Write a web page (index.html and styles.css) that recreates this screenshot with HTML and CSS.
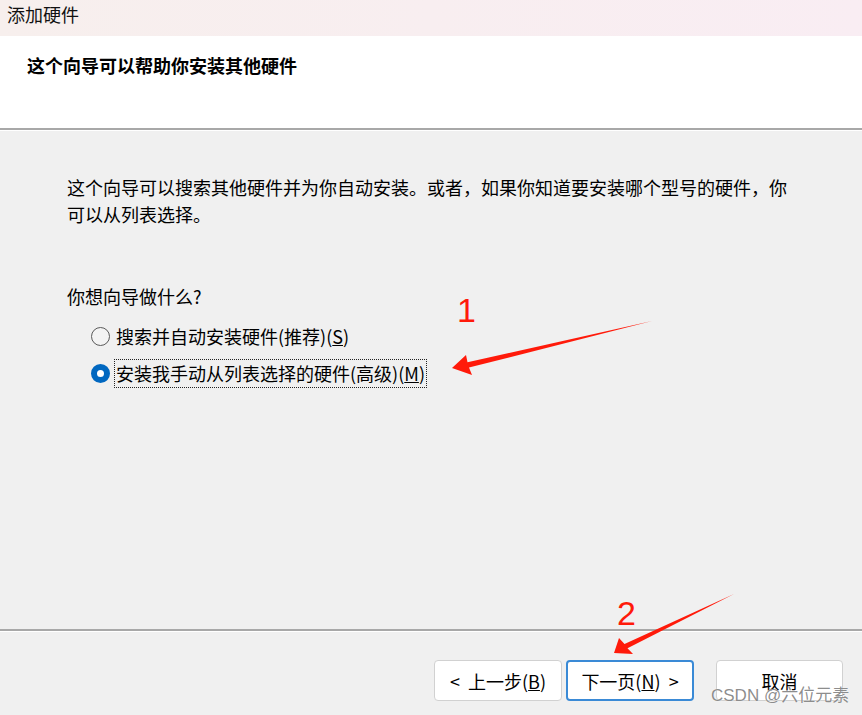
FILE: index.html
```html
<!DOCTYPE html>
<html lang="zh-CN">
<head>
<meta charset="utf-8">
<title>添加硬件</title>
<link rel="stylesheet" href="styles.css">
</head>
<body>
<div class="window">
  <div class="titlebar">添加硬件</div>
  <div class="header">
    <h1 class="heading">这个向导可以帮助你安装其他硬件</h1>
  </div>
  <div class="sep"></div>
  <div class="main">
    <p class="intro">这个向导可以搜索其他硬件并为你自动安装。或者，如果你知道要安装哪个型号的硬件，你可以从列表选择。</p>
    <p class="question">你想向导做什么?</p>
    <div class="options">
      <label class="option">
        <span class="radio"></span>
        <span class="opt-text">搜索并自动安装硬件(推荐)(<u>S</u>)</span>
      </label>
      <label class="option">
        <span class="radio checked"></span>
        <span class="opt-text focus">安装我手动从列表选择的硬件(高级)(<u>M</u>)</span>
      </label>
    </div>
  </div>
  <div class="sep"></div>
  <div class="footer">
    <button class="btn">&lt;&nbsp; 上一步(<u>B</u>)</button>
    <button class="btn primary">下一页(<u>N</u>)&nbsp; &gt;</button>
    <button class="btn cancel">取消</button>
  </div>
  <svg class="annot" width="862" height="715" viewBox="0 0 862 715">
    <text x="457" y="322" class="num">1</text>
    <polygon points="652,321 467.5,362.2 466,355 452,368 472,375 469,367.6" fill="#ff1a0a"/>
    <text x="617" y="625" class="num">2</text>
    <polygon points="734,594 624.5,644 619,638 614,653 633,654 627.5,648.2" fill="#ff1a0a"/>
  </svg>
  <div class="watermark">CSDN @六位元素</div>
</div>
</body>
</html>
```
FILE: styles.css
```css
html, body {
  margin: 0;
  padding: 0;
}
body {
  width: 862px;
  height: 715px;
  overflow: hidden;
  background: #f0f0f0;
  font-family: "Noto Sans CJK SC", "Noto Sans", sans-serif;
  color: #000;
}
.window {
  position: relative;
  display: flex;
  flex-direction: column;
  width: 862px;
  height: 715px;
}
.titlebar {
  height: 36px;
  box-sizing: border-box;
  padding-left: 7px;
  font-size: 18px;
  line-height: 28px;
  background: linear-gradient(to right, #f7efed, #f9edf3);
  color: #111;
}
.header {
  height: 92px;
  box-sizing: border-box;
  background: #ffffff;
  padding: 16px 0 0 27px;
}
.heading {
  margin: 0;
  font-size: 18px;
  line-height: 26px;
  font-weight: 700;
  color: #000;
}
.sep {
  height: 2px;
  background: #a8a8a8;
  border-bottom: 1px solid #ffffff;
  flex: none;
}
.main {
  flex: 1;
  padding: 43px 60px 0 67px;
  font-size: 18px;
}
.intro {
  margin: 0;
  line-height: 27px;
  width: 725px;
}
.question {
  margin: 55px 0 0 0;
  line-height: 27px;
}
.options {
  margin-top: 8px;
  padding-left: 24px;
  display: flex;
  flex-direction: column;
}
.option {
  display: flex;
  align-items: center;
  height: 37px;
}
.radio {
  width: 17px;
  height: 17px;
  border: 1px solid #5a5a5a;
  border-radius: 50%;
  box-sizing: content-box;
  background: #f3f3f3;
  margin-right: 4px;
  flex: none;
}
.radio.checked {
  width: 7px;
  height: 7px;
  border: 6px solid #0067c0;
  background: #ffffff;
}
.opt-text {
  padding: 0 1px 0 1px;
  line-height: 27px;
  border: 1px dotted transparent;
}
.opt-text.focus {
  border-color: #222;
}
.footer {
  height: 83px;
  box-sizing: border-box;
  padding: 28px 19px 0 0;
  display: flex;
  justify-content: flex-end;
  align-items: flex-start;
}
.btn {
  width: 128px;
  height: 41px;
  box-sizing: border-box;
  background: #ffffff;
  border: 1px solid #d1d1d1;
  border-radius: 4px;
  font-family: "Noto Sans CJK SC", "Noto Sans", sans-serif;
  font-size: 18px;
  color: #000;
  padding: 0;
  margin-left: 4px;
}
.btn.primary {
  border: 2px solid #3a8ad6;
}
.btn.cancel {
  width: 127px;
  margin-left: 22px;
}
.annot {
  position: absolute;
  left: 0;
  top: 0;
  pointer-events: none;
}
.num {
  font-family: "Liberation Sans", Arial, sans-serif;
  font-size: 34px;
  fill: #ff1a0a;
}
.watermark {
  position: absolute;
  left: 711px;
  top: 684px;
  font-family: "Liberation Sans", "Noto Sans CJK SC", sans-serif;
  font-size: 17px;
  line-height: 24px;
  color: rgba(120, 120, 120, 0.85);
  text-shadow: 0 0 1px #ffffff;
  white-space: nowrap;
}
```
